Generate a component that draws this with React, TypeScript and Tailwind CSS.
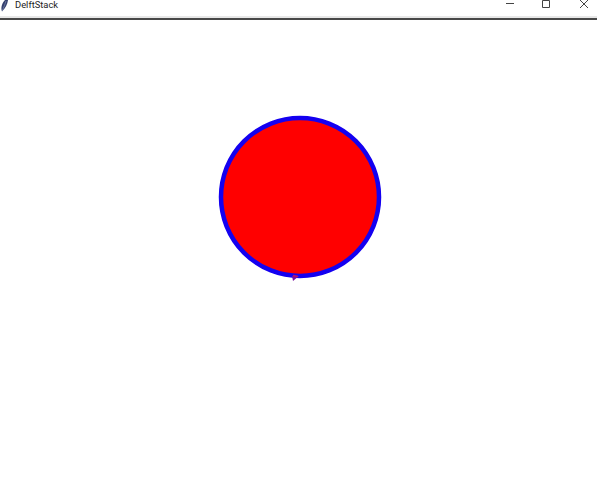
export default function App() {
  return (
    <div className="w-[597px] h-[500px] overflow-hidden bg-white flex flex-col font-['Roboto',sans-serif]">
      {/* Title bar, top edge cropped */}
      <div className="h-[16px] flex items-start justify-between bg-white">
        <div className="flex items-start">
          <svg width="9" height="12" viewBox="0 0 9 12">
            <path d="M8 0 C7.5 4 5.5 8 2 11.5 C0.5 8 2 3 5 0 Z" fill="#34406e" />
            <path d="M2 11 C4 7 5 4 6 1" stroke="#9aa6c8" strokeWidth="0.5" fill="none" />
          </svg>
          <span className="ml-[6px] text-[9.4px] leading-[9px] text-[#222]">DelftStack</span>
        </div>
        <div className="flex items-start text-[#444]">
          <svg width="10" height="10" viewBox="0 0 10 10" className="mr-[26px]">
            <path d="M1 3.5H9" stroke="currentColor" strokeWidth="1" />
          </svg>
          <svg width="10" height="10" viewBox="0 0 10 10" className="mr-[28px]">
            <path d="M1.5 0.5H8.5V7.5H1.5Z" stroke="currentColor" strokeWidth="1" fill="none" />
          </svg>
          <svg width="10" height="10" viewBox="0 0 10 10" className="mr-[8px]">
            <path d="M1 0L9 8M9 0L1 8" stroke="currentColor" strokeWidth="1" fill="none" />
          </svg>
        </div>
      </div>
      <div className="h-[2px] bg-[#e8e8e8]" />
      <div className="h-[2px] bg-[#484848]" />
      {/* Canvas */}
      <div className="flex-1 flex justify-center items-start pt-[93px] pl-[3px]">
        <svg width="168" height="172" viewBox="0 0 168 172">
          <circle cx="84" cy="84" r="79" fill="#ff0000" stroke="#1400f0" strokeWidth="4.5" />
          <path d="M77 168L83 163L76 163Z" fill="#7a10a0" />
          <path d="M77 162.5L82 163.5" stroke="#c01060" strokeWidth="1.5" />
        </svg>
      </div>
    </div>
  );
}
